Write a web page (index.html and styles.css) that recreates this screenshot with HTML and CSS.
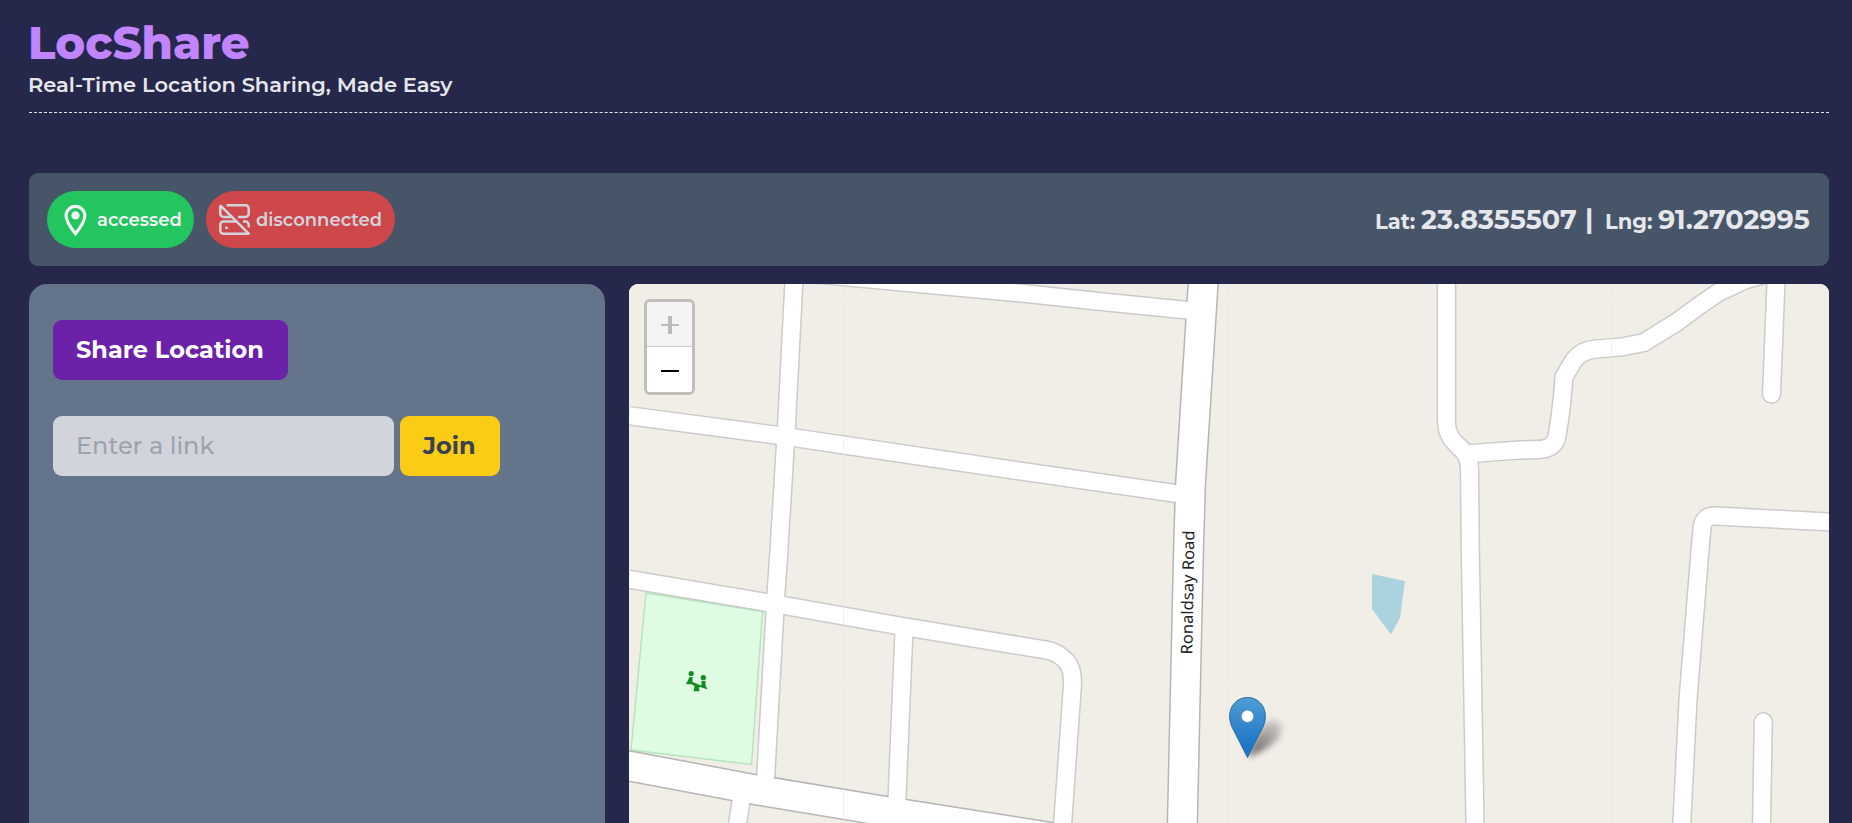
FILE: index.html
```html
<!DOCTYPE html>
<html lang="en">
<head>
<meta charset="utf-8">
<title>LocShare</title>
<link rel="stylesheet" href="styles.css">
</head>
<body>
<div class="page">
  <header class="header">
    <h1 class="brand"><span>LocShare</span></h1>
    <p class="tagline"><span>Real-Time Location Sharing, Made Easy</span></p>
  </header>

  <section class="status">
    <div class="pills">
      <div class="pill pill-ok">
        <svg class="icon-pin" viewBox="0 0 24 24" fill="none" stroke="currentColor" stroke-width="2"><path d="M12 20.800C8.900 16.900 6 13 6 9.300a6 6 0 0 1 12 0c0 3.700-2.900 7.600-6 11.500z" transform="translate(-1.700 -1.300) scale(1.140)"/><circle cx="12" cy="9" r="3" fill="currentColor" stroke="none"/></svg>
        <span class="pill-text">accessed</span>
      </div>
      <div class="pill pill-bad">
        <svg class="icon-server" viewBox="0 0 31 31" fill="none" stroke="currentColor" stroke-width="2.500" stroke-linejoin="round"><path d="M1.300 1.300 29.700 29.700H4.500a3.200 3.200 0 0 1-3.200-3.200v-5.900a3.200 3.200 0 0 1 3.200-3.200h12.500M1.300 1.300v8.400a3.200 3.200 0 0 0 3.200 3.200h8.500M7.500 1.300h19a3.200 3.200 0 0 1 3.200 3.200v5.200a3.200 3.200 0 0 1-3.200 3.200h-7.500M24 17.600h2.500a3.200 3.200 0 0 1 3.200 3.200v2.700"/><circle cx="7.500" cy="23.700" r="1.500" fill="currentColor" stroke="none"/></svg>
        <span class="pill-text">disconnected</span>
      </div>
    </div>
    <div class="coords">
      <span class="label lat">Lat:</span><span class="value v1">23.8355507</span><span class="value bar">|</span><span class="label lng">Lng:</span><span class="value v2">91.2702995</span>
    </div>
  </section>

  <main class="main">
    <aside class="panel">
      <button class="btn share"><span>Share Location</span></button>
      <div class="join-row">
        <input class="link" type="text" placeholder="Enter a link">
        <button class="btn join"><span>Join</span></button>
      </div>
    </aside>
    <section class="map">
      <svg class="tiles" viewBox="629 284 1200 539">
        <defs>
          <linearGradient id="pin" x1="0" y1="0" x2="0" y2="1"><stop offset="0" stop-color="#4f9dd3"/><stop offset=".8" stop-color="#1f76c9"/><stop offset="1" stop-color="#1f76c9"/></linearGradient>
          <linearGradient id="shade" gradientUnits="userSpaceOnUse" x1="1249" y1="755" x2="1285" y2="718"><stop offset="0" stop-color="#000" stop-opacity=".6"/><stop offset="1" stop-color="#000" stop-opacity="0.05"/></linearGradient>
          <filter id="soft" x="-30%" y="-30%" width="160%" height="160%"><feGaussianBlur stdDeviation="3"/></filter>
          <g id="minor">
            <path d="M794.500 270 786.500 426 779 550 776 593 765.500 780"/>
            <path d="M629 415.700 777 435.200 1020 471 1190 495.500"/>
            <path d="M700 265 825 275 1020 293 1100 301.500 1200 311.500"/>
            <path d="M629 579.300 767 602.500 900 626 1046 650Q1058 652 1066 661 1073 668 1072.500 684L1061.500 840"/>
            <path d="M904 630 896.500 810"/>
            <path d="M742 795 735 840"/>
            <path d="M1446.500 270V421C1447 449 1469 443 1469.500 469L1470.300 550 1475.300 840"/>
            <path d="M1464 454 1520 450 1538 449.500Q1555 449 1557 436 1562 408 1564 377L1574 360Q1582 350 1596 349L1622 347 1644 342.500 1677 322 1700 305 1719 292 1745 280 1780 270"/>
            <path d="M1776.500 270 1771.500 394" stroke-linecap="round"/>
            <path d="M1840 522.500 1716 516Q1703 515.500 1702 528L1700 550 1688 700 1681 840"/>
            <path d="M1763.300 722 1761.300 840" stroke-linecap="round"/>
          </g>
          <g id="major">
            <path d="M1204 270 1190.500 484 1188.500 550 1182 840"/>
            <path d="M600 760.500 629 766 757 790 890 812 1080 842"/>
          </g>
        </defs>
        <rect x="629" y="284" width="1200" height="539" fill="#f1eee8"/>
        <path d="M646 593 762.500 611.500 751.500 764.500 631 750z" fill="#dffce2" stroke="#b4e6bb" stroke-width="1.500"/>
        <path d="M1372 574 1405 581 1400 618 1391 634.500 1372 609z" fill="#aad3df"/>
        <use href="#minor" class="case-minor"/>
        <use href="#major" class="case-major"/>
        <use href="#minor" class="fill-minor"/>
        <use href="#major" class="fill-major"/>
        <g fill="#128b22"><circle cx="691.200" cy="673.500" r="2.600"/><circle cx="703.300" cy="677.700" r="2.600"/><path d="M689.500 677h3v5l6 2.600 3 .8v-4.400h4v4.500l2 4-6.500-2.300h-2.200l.7 4h-6l1-5-2.500-2H686z"/></g>
        <path class="seams" d="M843.500 284V823M1227.500 284V823M1611.500 284V823"/>
        <path class="dots" d="M842 297.500h2M842 681.500h2M1226 297.500h2M1226 681.500h2M1610 297.500h2M1610 681.500h2"/>
        <text class="road" transform="translate(1192.300 654.500) rotate(-89)" textLength="124" lengthAdjust="spacingAndGlyphs">Ronaldsay Road</text>
        <path d="M1248 757C1254 740 1262 722 1274 720 1286 720 1283 735 1275 742Q1263 752 1248 757z" fill="url(#shade)" filter="url(#soft)"/>
        <path d="M1247.500 757.500 1232 727C1225 711 1234.500 697.500 1247.500 697.500S1270 711 1263 727z" fill="url(#pin)" stroke="#2e6c97" stroke-width="1"/>
        <circle cx="1247.500" cy="716.300" r="6.200" fill="#fff" stroke="#2e6c97" stroke-opacity=".5"/>
      </svg>
      <div class="zoom">
        <button class="zoom-btn off" aria-label="Zoom in"><svg viewBox="0 0 18 18"><path d="M0 9h18" stroke="currentColor" stroke-width="2"/><path d="M9 0v18" stroke="currentColor" stroke-width="4"/></svg></button>
        <button class="zoom-btn" aria-label="Zoom out"><svg viewBox="0 0 18 18"><path d="M0 9h18" stroke="currentColor" stroke-width="2"/></svg></button>
      </div>
    </section>
  </main>
</div>
</body>
</html>
```
FILE: styles.css
```css
* { box-sizing: border-box; }
html, body { height: 100%; }
body {
  margin: 0;
  overflow: hidden;
  background: #26284b;
  color: #e5e7eb;
  font-family: Montserrat, Inter, sans-serif;
}
.page {
  width: 1852px;
  height: 823px;
  padding: 20px 23px 0 29px;
  display: flex;
  flex-direction: column;
}
.header {
  height: 93px;
  flex: none;
  border-bottom: 1px dashed #e5e7eb;
  white-space: nowrap;
}
.brand {
  margin: 0 0 0 -1px;
  color: #c084fc;
  font-size: 45px;
  line-height: 45px;
  font-weight: 800;
}
.tagline {
  margin: 5px 0 0 -1px;
  font-size: 21px;
  line-height: 30px;
  font-weight: 600;
}
.status {
  margin-top: 60px;
  height: 93px;
  flex: none;
  padding: 18px;
  border-radius: 9px;
  background: #475569;
  display: flex;
  align-items: center;
  justify-content: space-between;
}
.pills { display: flex; gap: 12px; }
.pill {
  height: 57px;
  border-radius: 29px;
  display: flex;
  align-items: center;
  font-size: 18px;
  font-weight: 600;
  white-space: nowrap;
}
.pill-ok { width: 147px; padding-left: 12px; background: #22c55e; color: #f3f4f6; }
.pill-bad { width: 189px; padding-left: 13px; background: #ce474b; color: #d1d5db; }
.icon-pin { width: 33px; height: 33px; margin-right: 5px; }
.icon-server { width: 31px; height: 31px; margin-right: 6px; }
.coords { display: flex; align-items: baseline; white-space: nowrap; }
.label { font-size: 21px; font-weight: 700; }
.value { font-size: 27px; font-weight: 700; }
.lat { width: 46px; }
.v1 { width: 164px; }
.bar { width: 20px; }
.lng { width: 53px; }
.v2 { width: 153px; }
.main {
  margin-top: 18px;
  flex: 1;
  min-height: 0;
  display: flex;
  gap: 24px;
}
.panel {
  width: 576px;
  padding: 36px 24px 0;
  border-radius: 18px 18px 0 0;
  background: #64748b;
}
.btn {
  height: 60px;
  display: block;
  padding: 0 0 2px 23px;
  border: 0;
  border-radius: 9px;
  font: 700 24px Montserrat, Inter, sans-serif;
  text-align: left;
  white-space: nowrap;
}
.share { width: 235px; background: #6b21a8; color: #fff; }
.join-row { display: flex; gap: 6px; margin-top: 36px; }
.link {
  width: 341px;
  height: 60px;
  padding: 0 23px 2px;
  border: 0;
  border-radius: 9px;
  background: #d1d5db;
  font: 500 24px Montserrat, Inter, sans-serif;
}
.link::placeholder { color: #9ca3af; }
.join { width: 100px; background: #facc15; color: #374151; }
.map {
  position: relative;
  width: 1200px;
  border-radius: 9px 9px 0 0;
  overflow: hidden;
  background: #f1eee8;
}
.tiles { display: block; width: 1200px; height: 539px; }
.case-minor, .case-major, .fill-minor, .fill-major { fill: none; }
.case-minor { stroke: #cbcbc9; stroke-width: 19.800px; }
.case-major { stroke: #b5b5b3; stroke-width: 31.500px; }
.fill-minor { stroke: #fff; stroke-width: 16.800px; }
.fill-major { stroke: #fff; stroke-width: 28.500px; }
.seams { stroke: #e9e8e4; stroke-width: 1px; opacity: .6; }
.dots { stroke: #fff; stroke-width: 1px; }
.road { font: 16px "Noto Sans", sans-serif; fill: #222; }
.zoom {
  position: absolute;
  left: 15px;
  top: 15px;
  width: 51px;
  height: 96px;
  border: 3px solid rgba(0, 0, 0, .2);
  border-radius: 6px;
  background-clip: padding-box;
}
.zoom-btn {
  width: 45px;
  height: 45px;
  padding: 2px 0 0 1px;
  border: 0;
  background: #fff;
  color: #000;
  display: grid;
  place-items: center;
  border-radius: 0 0 3px 3px;
}
.zoom-btn svg { width: 18px; height: 18px; }
.off {
  background: #f4f4f4;
  color: #bbb;
  border-bottom: 1px solid #ccc;
  border-radius: 3px 3px 0 0;
}
```
